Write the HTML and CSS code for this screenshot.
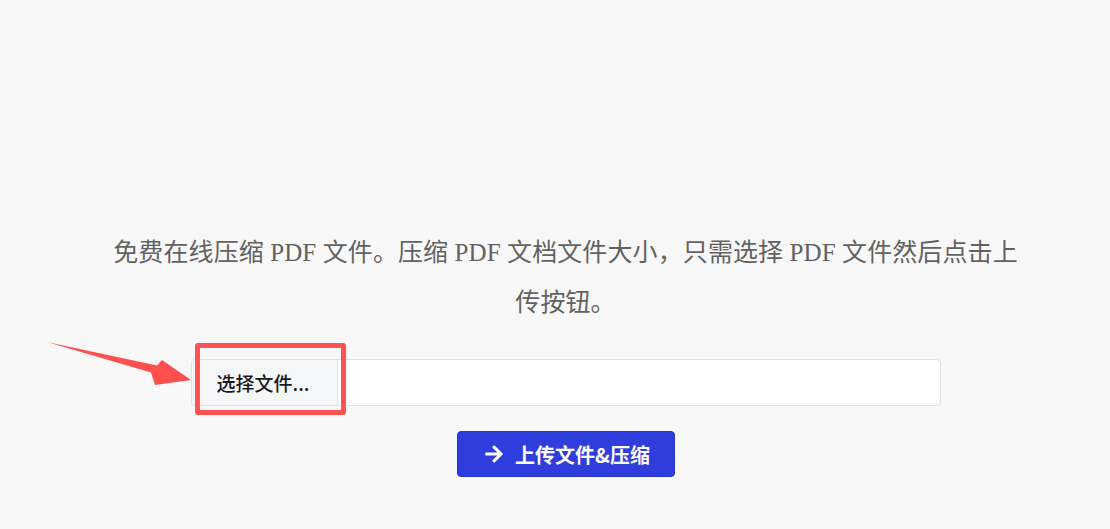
FILE: index.html
```html
<!DOCTYPE html>
<html lang="zh-CN">
<head>
<meta charset="utf-8">
<title>压缩 PDF</title>
<link rel="stylesheet" href="styles.css">
</head>
<body>
<main class="page">
  <p class="intro">免费在线压缩 PDF 文件。压缩 PDF 文档文件大小，只需选择 PDF 文件然后点击上传按钮。</p>
  <div class="file-group">
    <label class="file-btn">选择文件...</label>
    <div class="file-name"></div>
    <div class="highlight"></div>
  </div>
  <button class="upload-btn" type="button">
    <svg class="arrow-icon" viewBox="0 0 448 512" aria-hidden="true"><path fill="#fff" d="M190.5 66.9l22.2-22.2c9.4-9.4 24.6-9.4 33.9 0L441 239c9.4 9.4 9.4 24.6 0 33.9L246.6 467.3c-9.4 9.4-24.6 9.4-33.9 0l-22.2-22.2c-9.5-9.5-9.3-25 .4-34.3L311.4 296H24c-13.3 0-24-10.7-24-24v-32c0-13.3 10.7-24 24-24h287.4L190.9 101.2c-9.8-9.3-10-24.8-.4-34.3z"/></svg>
    <span>上传文件&amp;压缩</span>
  </button>
</main>
<svg class="pointer" viewBox="0 0 160 55" width="160" height="55" aria-hidden="true">
  <polygon fill="#ff5050" points="7,7 117,30.5 122,25 151,45 115,50 111,37.5"/>
</svg>
</body>
</html>
```
FILE: styles.css
```css
html, body {
  margin: 0;
  padding: 0;
  background: #f8f8f8;
}
body {
  position: relative;
  width: 1110px;
  height: 529px;
  overflow: hidden;
}
.page {
  display: flex;
  flex-direction: column;
  align-items: center;
  padding: 228px 0 0 21px;
}
.intro {
  margin: 0;
  width: 920px;
  text-align: center;
  font-family: "Liberation Serif", "Noto Sans CJK SC", serif;
  font-size: 25px;
  letter-spacing: 0.1px;
  line-height: 50px;
  color: #626262;
}
.file-group {
  position: relative;
  margin-top: 31px;
  width: 750px;
  height: 47px;
  box-sizing: border-box;
  display: flex;
  background: #fff;
  border: 1px solid #dfe2e6;
  border-radius: 4px;
}
.file-btn {
  width: 146px;
  box-sizing: border-box;
  display: flex;
  align-items: center;
  padding-left: 25px;
  background: #f4f6f8;
  border-right: 1px solid #dfe2e6;
  border-radius: 4px 0 0 4px;
  font-family: "Noto Sans CJK SC", "Noto Sans", sans-serif;
  font-size: 19px;
  font-weight: 500;
  color: #1a1a1a;
}
.file-name {
  flex: 1;
}
.highlight {
  position: absolute;
  left: 3px;
  top: -17px;
  width: 151px;
  height: 72px;
  box-sizing: border-box;
  border: 5px solid #ff5252;
  border-radius: 3px;
}
.upload-btn {
  margin-top: 25px;
  width: 218px;
  height: 46px;
  display: flex;
  align-items: center;
  justify-content: center;
  gap: 12px;
  padding: 0 0 0 4px;
  background: #2f3ddc;
  border: 1px solid #2a36c8;
  border-radius: 4px;
  color: #fff;
  font-family: "Noto Sans CJK SC", "Noto Sans", sans-serif;
  font-size: 20px;
  font-weight: 700;
}
.arrow-icon {
  width: 18px;
  height: 20px;
}
.pointer {
  position: absolute;
  left: 40px;
  top: 335px;
}
```
